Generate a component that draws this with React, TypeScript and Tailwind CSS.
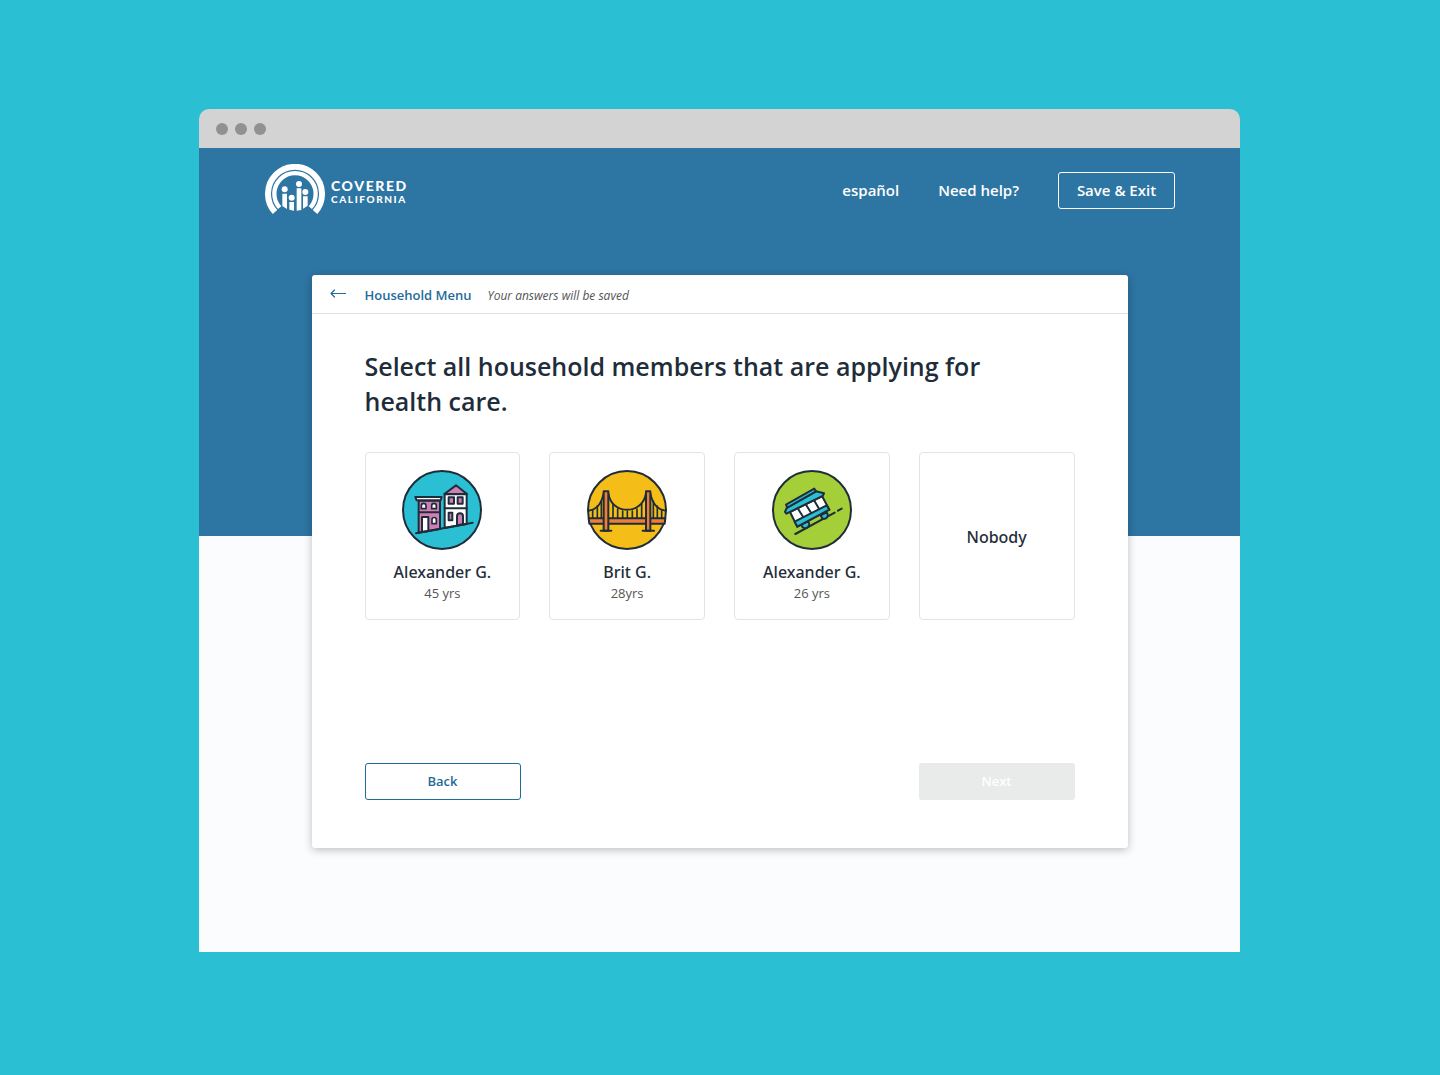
import type { ReactNode } from "react";

const INK = "#1f2d3a";

function Badge({ fill, children }: { fill: string; children: ReactNode }) {
  return (
    <svg
      viewBox="24 24 240 240"
      className="size-20"
      fill="none"
      stroke={INK}
      strokeWidth="6"
      strokeLinejoin="round"
      strokeLinecap="round"
      aria-hidden="true"
    >
      <circle cx="144" cy="144" r="117" fill={fill} />
      {children}
    </svg>
  );
}

function HousesIcon() {
  return (
    <Badge fill="#2bbfd4">
      <path d="M74 116H138V201L74 212Z" fill="#d07fb6" />
      <path d="M75 151H137" />
      <path d="M64 105H143L140 115H68Z" fill="#fff" />
      <path d="M82 140V131A7 7 0 0 1 96 131V140Z" fill="#fff" strokeWidth="5" />
      <path d="M113 140V131A7 7 0 0 1 127 131V140Z" fill="#fff" strokeWidth="5" />
      <path d="M84 210V165H103V207Z" fill="#fff" />
      <path d="M114 185V173A6 6 0 0 1 127 173V185Z" fill="#fff" strokeWidth="5" />
      <path d="M152 97H218V186L152 198Z" fill="#fff" />
      <path d="M151 96L186 70L219 96Z" fill="#d07fb6" />
      <path d="M164 106H180V125H164ZM191 106H206V125H191Z" fill="#d07fb6" />
      <path d="M152 139H218" />
      <path d="M164 152H175V175H164Z" fill="#d07fb6" />
      <path d="M189 190V163A9 9 0 0 1 207 163V187Z" fill="#d07fb6" />
      <path d="M66 214L236 182" />
    </Badge>
  );
}

function BridgeIcon() {
  return (
    <Badge fill="#f5bd17">
      <path
        strokeWidth="5"
        d="M41 144V168M55 132V168M67 117V168M102 126V168M116 141V168M131 147V168M145 149V168M160 147V168M174 141V168M188 126V168M223 117V168M235 132V168M248 144V168"
      />
      <path d="M29 169H259L257 185H31Z" fill="#ee7d38" />
      <path d="M29 146C52 143 68 124 74 94M88 94C98 160 190 160 201 94M214 94C220 124 236 143 260 146" />
      <path d="M74 88H88V206H74ZM201 88H214V206H201Z" fill="#ee7d38" />
      <path d="M65 206H97M191 206H225" />
    </Badge>
  );
}

function CableCarIcon() {
  return (
    <Badge fill="#a4cf38">
      <path d="M94 216L212 152M222 146L233 140" />
      <path d="M112 187L132 178A10 10 0 0 1 115 195ZM170 160L187 151A10 10 0 0 1 174 168Z" fill="#2bbfd4" />
      <path d="M78 150L174 102L196 143L100 194Z" fill="#fff" />
      <path d="M92 179L188 130L196 143L100 194Z" fill="#2bbfd4" />
      <path d="M103 142L117 164M126 128L141 152M151 116L165 140" />
      <path d="M68 138L156 88L180 94L176 102L67 155L63 150Z" fill="#2bbfd4" />
      <path d="M66 128L151 80L156 88L70 137Z" fill="#2bbfd4" />
    </Badge>
  );
}

function Logo() {
  return (
    <a href="#home" className="flex items-center gap-[6px] text-white" aria-label="Covered California">
      <svg viewBox="30 27 180 156" className="h-[52px] w-[60px]" aria-hidden="true">
        <g fill="none" stroke="#fff">
          <path d="M60 171A81 81 0 1 1 180 171" strokeWidth="18" />
          <path d="M74 158A62 62 0 1 1 166 158" strokeWidth="13" />
        </g>
        <g fill="#fff">
          <circle cx="89" cy="103" r="9" />
          <circle cx="132" cy="87" r="9" />
          <circle cx="110" cy="128" r="9" />
          <circle cx="151" cy="111" r="9" />
          <path d="M82 116H96V162L82 153ZM103 141H117V167L103 164ZM125 100H139V165L125 167ZM144 124H158V152L144 161Z" />
        </g>
      </svg>
      <span className="flex flex-col pt-1 font-['Lato'] font-black tracking-widest">
        <span className="text-[14px] leading-[14px]">COVERED</span>
        <span className="text-[10px] leading-3">CALIFORNIA</span>
      </span>
    </a>
  );
}

const members = [
  { id: "m1", name: "Alexander G.", age: "45 yrs", icon: <HousesIcon /> },
  { id: "m2", name: "Brit G.", age: "28yrs", icon: <BridgeIcon /> },
  { id: "m3", name: "Alexander G.", age: "26 yrs", icon: <CableCarIcon /> },
];

function Tile({ id, children }: { id: string; children: ReactNode }) {
  return (
    <label
      htmlFor={id}
      className="flex h-[168px] cursor-pointer flex-col items-center rounded border border-[#e3e4e5] text-[#1f2d3a] has-checked:border-[#1f6b9a]"
    >
      <input id={id} type="checkbox" className="sr-only" />
      {children}
    </label>
  );
}

export default function App() {
  return (
    <div className="min-h-screen bg-[#2abfd2] pt-[109px] pr-px pb-[123px] font-['Open_Sans','Noto_Sans',sans-serif]">
      <div className="mx-auto w-full max-w-[1041px]">
        <div className="flex h-[39px] items-center gap-[7px] rounded-t-[10px] bg-[#d3d3d3] px-[17px]">
          <span className="size-3 rounded-full bg-[#919191]" />
          <span className="size-3 rounded-full bg-[#919191]" />
          <span className="size-3 rounded-full bg-[#919191]" />
        </div>

        <div className="bg-[linear-gradient(#2d75a3_388px,#fbfcfe_388px)] pb-[104px]">
          <header className="flex items-start justify-between pt-4 pr-[65px] pl-[66px] text-white">
            <Logo />
            <nav className="mt-2 flex items-center gap-[39px] text-[15px] font-semibold">
              <a href="#es">español</a>
              <a href="#help">Need help?</a>
              <button type="button" className="h-[37px] w-[117px] rounded-[3px] border border-white">
                Save &amp; Exit
              </button>
            </nav>
          </header>

          <main className="mx-auto mt-[59px] max-w-[816px] rounded-[3px] bg-white shadow-[0_2px_8px_rgba(0,0,0,0.25)]">
            <div className="flex h-[39px] items-center border-b border-[#dfe1e3] px-[18px] pt-[3px]">
              <a href="#household" className="flex items-center text-[13px] font-semibold text-[#1f6b9a]">
                <svg viewBox="0 0 17 9" className="mr-[18px] mb-1 h-[9px] w-[17px]" fill="none" stroke="currentColor" aria-hidden="true">
                  <path d="M15.500 4.500H1M4.500 1L1 4.500L4.500 8" strokeWidth="1.200" strokeLinecap="round" strokeLinejoin="round" />
                </svg>
                Household Menu
              </a>
              <em className="ml-4 text-xs text-[#555]">Your answers will be saved</em>
            </div>

            <form className="px-[53px] pt-[35px] pb-12">
              <h1 className="max-w-[660px] text-[25px] leading-[35px] font-semibold text-[#1f2d3a]">
                Select all household members that are applying for health care.
              </h1>

              <div className="mt-[33px] grid grid-cols-4 gap-[29px]">
                {members.map((m) => (
                  <Tile key={m.id} id={m.id}>
                    <span className="mt-[17px]">{m.icon}</span>
                    <span className="mt-[11px] font-['Noto_Sans'] text-base leading-[22px] font-medium">{m.name}</span>
                    <span className="text-[13px] leading-5 text-[#555]">{m.age}</span>
                  </Tile>
                ))}
                <Tile id="nobody">
                  <span className="my-auto pt-px font-['Noto_Sans'] text-base font-medium">Nobody</span>
                </Tile>
              </div>

              <div className="mt-[143px] flex justify-between text-[13px] font-semibold">
                <button type="button" className="h-[37px] w-[156px] rounded-[3px] border border-[#1f6b9a] text-[#1f6b9a]">
                  Back
                </button>
                <button type="submit" disabled className="h-[37px] w-[156px] rounded-[3px] bg-[#e9eaea] text-white">
                  Next
                </button>
              </div>
            </form>
          </main>
        </div>
      </div>
    </div>
  );
}
